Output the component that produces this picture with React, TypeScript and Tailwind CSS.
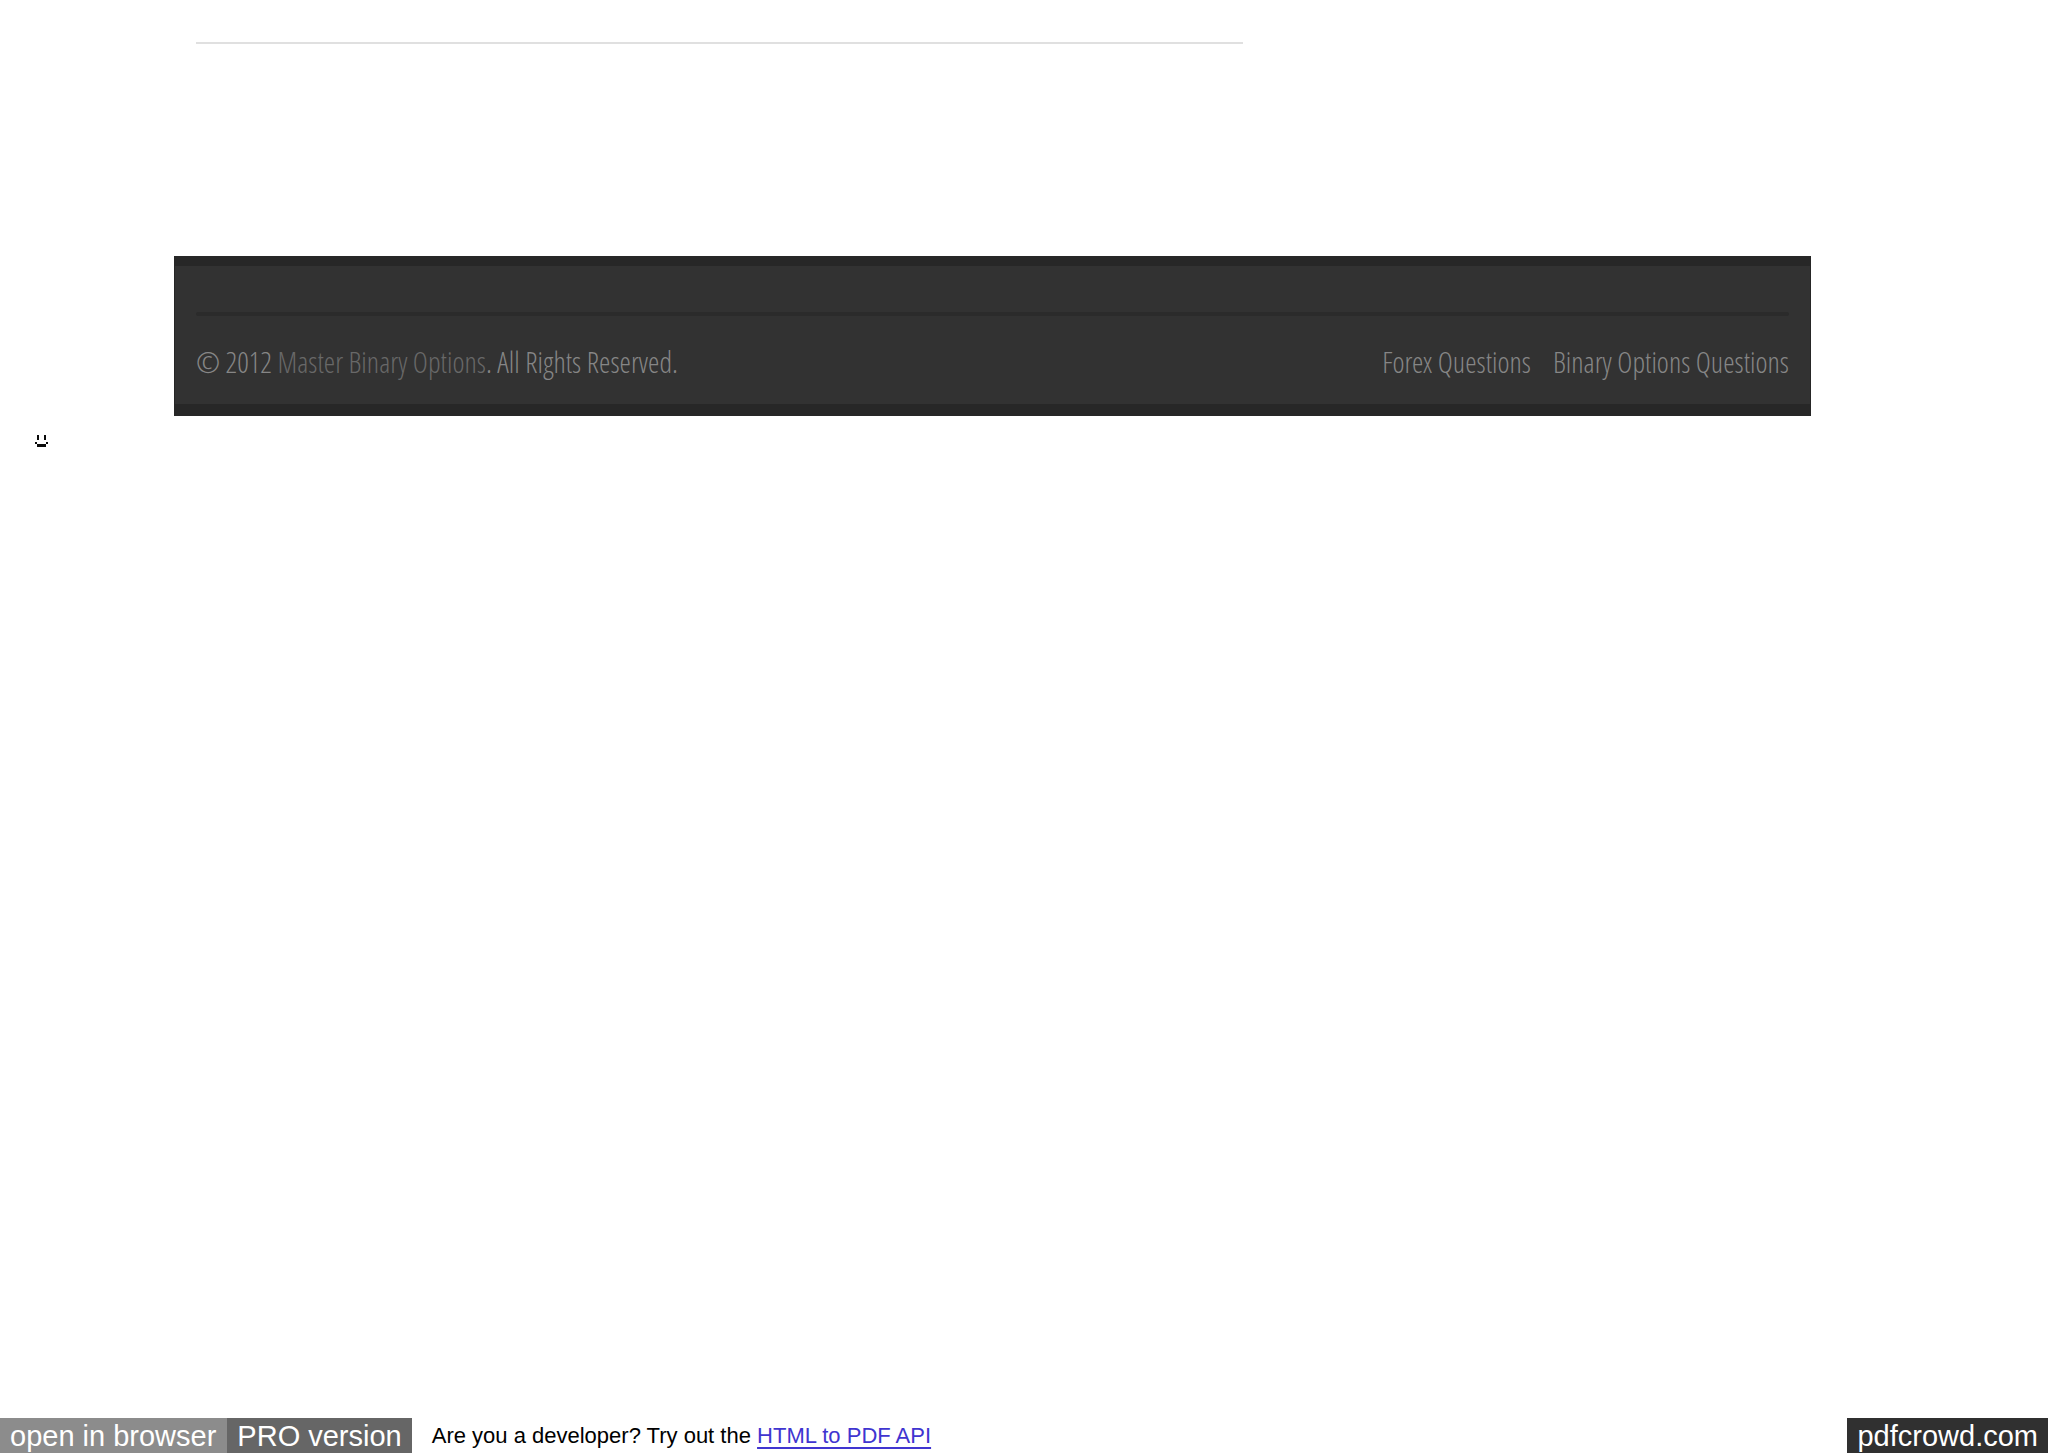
import React from 'react';

const footerLinks = ['Forex Questions', 'Binary Options Questions'];

const Smiley = () => (
  <svg width="15" height="14" viewBox="0 0 15 14" role="img" aria-label="smiley">
    <path d="M3 1h2v5H3zM10 1h2v5h-2zM3 10h9v3H3zM1 8h2v2H1zM12 8h2v2h-2z" fill="#0a0a0a" />
  </svg>
);

const SiteFooter = () => {
  return (
    <footer className="border border-y-0 border-[#262626] bg-[#323232] font-['Open_Sans_Condensed_Light','Open_Sans_Condensed','Open_Sans',sans-serif] text-[29px] leading-10 font-light text-[#868686]">
      <div className="h-[10px] bg-[#272727]" />
      <div className="px-[21px] pt-[46px] pb-[22px]">
        <div className="h-1 rounded-full bg-[#2b2b2b]" />
        <div className="flex justify-between pt-[26px]">
          <p>
            © 2012{' '}
            <a href="#home" className="text-[#686868]">
              Master Binary Options
            </a>
            . All Rights Reserved.
          </p>
          <nav className="flex gap-[22px]">
            {footerLinks.map((label) => (
              <a key={label} href="#questions">
                {label}
              </a>
            ))}
          </nav>
        </div>
      </div>
      <div className="h-3 bg-[#272727]" />
    </footer>
  );
};

const PdfBar = () => {
  return (
    <div className="flex h-[35px] items-stretch text-[29px] leading-[36px] text-white">
      <a href="#open" className="bg-[#8c8c8c] pr-[11px] pl-[10px]">
        open in browser
      </a>
      <a href="#pro" className="bg-[#666666] px-[10px]">
        PRO version
      </a>
      <p className="pl-5 text-[22px] text-black">
        Are you a developer? Try out the{' '}
        <a href="#api" className="text-[#4035d0] underline decoration-2 underline-offset-4">
          HTML to PDF API
        </a>
      </p>
      <a href="#pdfcrowd" className="ml-auto bg-[#303030] px-[10px]">
        pdfcrowd.com
      </a>
    </div>
  );
};

const App = () => {
  return (
    <div className="flex min-h-screen flex-col bg-white font-['Liberation_Sans',Arial,sans-serif]">
      <main className="grow">
        <div className="pr-[237px] pl-[174px]">
          {/* End of the content column */}
          <div className="px-[22px] pt-[42px] pb-[212px]">
            <hr className="w-full max-w-[1047px] border-t-2 border-[#e0e0e0]" />
          </div>
          <SiteFooter />
        </div>
        <div className="pt-[18px] pl-[34px]">
          <Smiley />
        </div>
      </main>
      <PdfBar />
    </div>
  );
};

export default App;
